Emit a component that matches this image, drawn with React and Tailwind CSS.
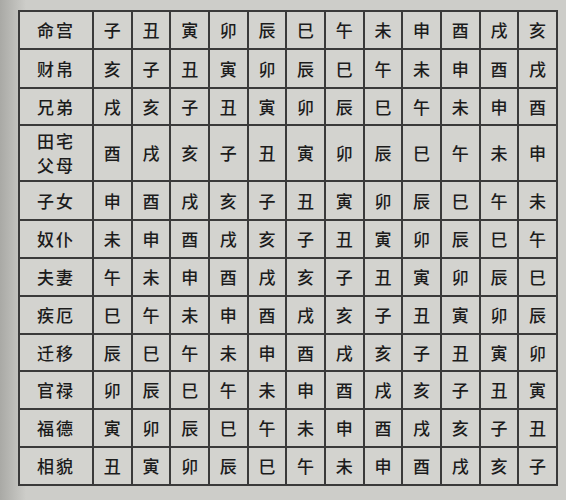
import React from "react";

const BRANCHES = ["子", "丑", "寅", "卯", "辰", "巳", "午", "未", "申", "酉", "戌", "亥"];

const ROWS = [
  { label: ["命宫"], h: "h-[38px]" },
  { label: ["财帛"], h: "h-[39px]" },
  { label: ["兄弟"], h: "h-[37px]" },
  { label: ["田宅", "父母"], h: "h-[56px]" },
  { label: ["子女"], h: "h-[39px]" },
  { label: ["奴仆"], h: "h-[38px]" },
  { label: ["夫妻"], h: "h-[38px]" },
  { label: ["疾厄"], h: "h-[38px]" },
  { label: ["迁移"], h: "h-[37px]" },
  { label: ["官禄"], h: "h-[38px]" },
  { label: ["福德"], h: "h-[38px]" },
  { label: ["相貌"], h: "h-[38px]" },
];

const App = () => {
  return (
    <div
      className="relative w-[566px] h-[500px] overflow-hidden bg-[#cdcdc9] pt-[10px] pl-[18px] text-[#1c1c1c]"
      style={{ fontFamily: '"Noto Sans CJK SC", "Noto Sans CJK TC", sans-serif' }}
    >
      {/* paper shadow near the book spine */}
      <div className="absolute left-0 top-0 h-full w-[26px] bg-linear-to-r from-[#a9a9a5] to-transparent" />
      <table className="relative border-collapse border-[2px] border-[#3a3a3a] bg-[#d3d3cf] w-[540px] table-fixed">
        <colgroup>
          <col className="w-[74px]" />
          {BRANCHES.map((b) => (
            <col key={b} />
          ))}
        </colgroup>
        <tbody>
          {ROWS.map((row, r) => (
            <tr key={r} className={row.h}>
              <td className="border-[2px] border-[#3a3a3a] text-center text-[17px] leading-[24px] tracking-[2px] font-medium p-0">
                {row.label.map((l) => (
                  <div key={l}>{l}</div>
                ))}
              </td>
              {BRANCHES.map((_, c) => (
                <td
                  key={c}
                  className="border-[2px] border-[#3a3a3a] text-center text-[17px] font-medium p-0"
                >
                  {BRANCHES[(c - r + 12) % 12]}
                </td>
              ))}
            </tr>
          ))}
        </tbody>
      </table>
    </div>
  );
};

export default App;
